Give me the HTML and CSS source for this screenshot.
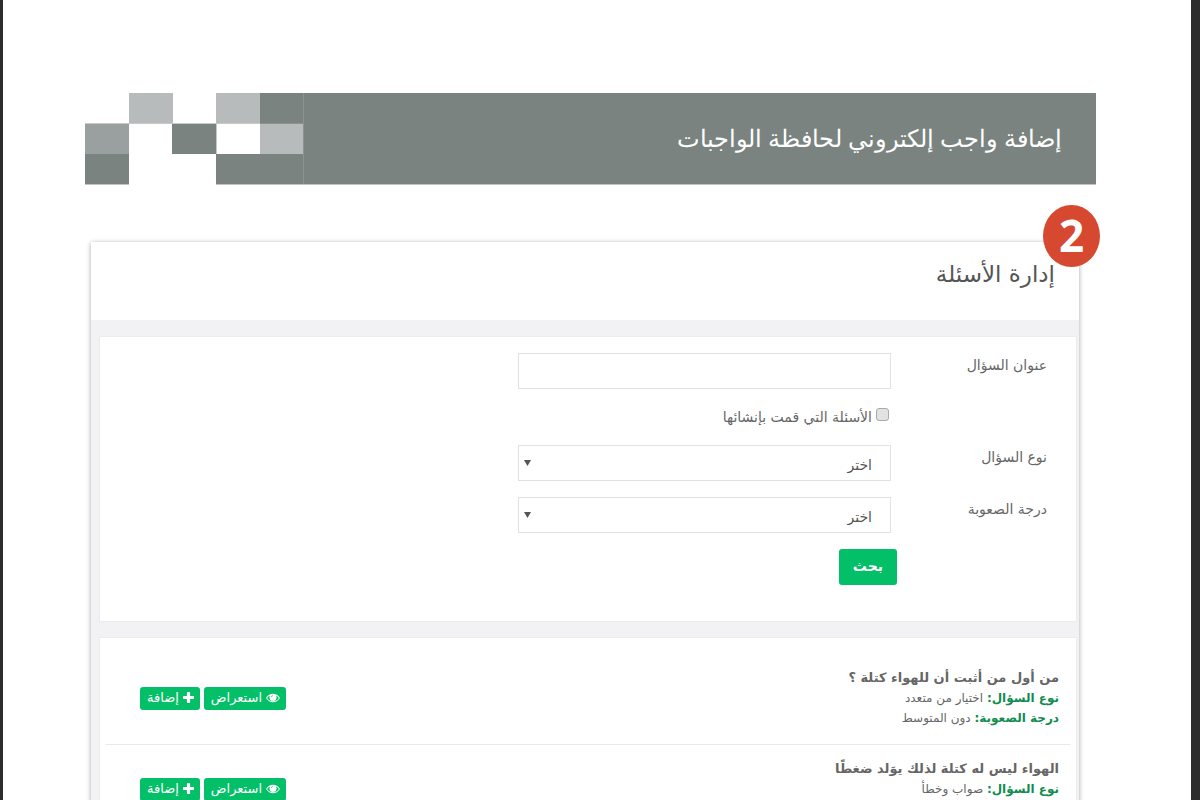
FILE: index.html
```html
<!DOCTYPE html>
<html lang="ar" dir="rtl">
<head>
<meta charset="utf-8">
<title>إدارة الأسئلة</title>
<meta name="viewport" content="width=device-width, initial-scale=1">
<link rel="stylesheet" href="styles.css">
</head>
<body>
<svg class="sprite" aria-hidden="true">
  <symbol id="eye" viewBox="0 0 14 10">
    <path fill="currentColor" fill-rule="evenodd" d="M0 5Q2.800.8 7 .8T14 5Q11.200 9.200 7 9.200T0 5ZM1.100 5Q3.300 8.300 7 8.300T12.900 5Q11.800 3.300 10 2.400Q10.500 3.200 10.500 4.300A3.500 3.500 0 0 1 3.500 4.300Q3.500 3.200 4 2.400Q2.200 3.300 1.100 5Z"/>
    <circle cx="7" cy="4.400" r="3.200" fill="currentColor"/>
    <path d="M5.300 4.200A1.700 1.700 0 0 1 7 2.500" fill="none" stroke="#02bf68" stroke-width=".6"/>
  </symbol>
  <symbol id="plus" viewBox="0 0 11 11">
    <path fill="currentColor" d="M4.700 0h1.600q.8 0 .8.800v3.100h3.100q.8 0 .8.800v1.600q0 .8-.8.800H7.100v3.100q0 .8-.8.800H4.700q-.8 0-.8-.8V7.100H.8q-.8 0-.8-.8V4.700q0-.8.800-.8h3.100V.8q0-.8.800-.8z"/>
  </symbol>
</svg>
<main class="sheet">
  <header class="banner">
    <h1 class="banner-title">إضافة واجب إلكتروني لحافظة الواجبات</h1>
    <svg class="mosaic" viewBox="0 0 219 92" aria-hidden="true">
      <g fill="#fff"><path d="M0 0h44v31H0zM88 0h43v31H88zM44 31h43v61H44zM87 61h44v31H87zM131 31h44v30h-44z"/></g>
      <g fill="#b7bbbb"><path d="M44 0h44v31H44zM131 0h44v31h-44zM175 31h43v30h-43z"/></g>
      <path fill="#9aa09f" d="M0 31h44v30H0z"/>
      <path fill="none" stroke="#c5c9c8" d="M0 30.500h175M131.500 31v30"/>
      <path fill="none" stroke="#8c9391" d="M218.500 0v91M175 30.500h43"/>
    </svg>
  </header>

  <section class="panel">
    <span class="badge">2</span>
    <div class="panel-head"><h2 class="panel-title">إدارة الأسئلة</h2></div>

    <form class="card filter">
      <label class="label" for="title">عنوان السؤال</label>
      <div class="field"><input class="control" id="title" type="text"></div>
      <div class="field second check">
        <input class="tick" id="mine" type="checkbox">
        <label for="mine">الأسئلة التي قمت بإنشائها</label>
      </div>
      <label class="label" for="type">نوع السؤال</label>
      <div class="field"><select class="control select" id="type"><option>اختر</option></select></div>
      <label class="label" for="level">درجة الصعوبة</label>
      <div class="field"><select class="control select" id="level"><option>اختر</option></select></div>
      <div class="second"><button class="search" type="button">بحث</button></div>
    </form>

    <div class="card list">
      <article class="item">
        <div>
          <h3 class="question">من أول من أثبت أن للهواء كتلة ؟</h3>
          <p class="meta"><b>نوع السؤال:</b> اختيار من متعدد</p>
          <p class="meta"><b>درجة الصعوبة:</b> دون المتوسط</p>
        </div>
        <div class="actions">
          <button class="small" type="button"><svg class="eye"><use href="#eye"/></svg>استعراض</button>
          <button class="small" type="button"><svg class="plus"><use href="#plus"/></svg>إضافة</button>
        </div>
      </article>
      <article class="item">
        <div>
          <h3 class="question">الهواء ليس له كتلة لذلك يوَلد ضغطًا</h3>
          <p class="meta"><b>نوع السؤال:</b> صواب وخطأ</p>
        </div>
        <div class="actions">
          <button class="small" type="button"><svg class="eye"><use href="#eye"/></svg>استعراض</button>
          <button class="small" type="button"><svg class="plus"><use href="#plus"/></svg>إضافة</button>
        </div>
      </article>
    </div>
  </section>
</main>
</body>
</html>
```

FILE: styles.css
```css
* { box-sizing: border-box; }
body {
  margin: 0;
  height: 100vh;
  overflow: hidden;
  background: #2d2d2d;
  color: #666;
  font-family: "DejaVu Sans", sans-serif;
  font-size: 14px;
  line-height: 20px;
}
h1, h2, h3, p { margin: 0; }
.sprite { position: absolute; width: 0; height: 0; }
.sheet {
  min-height: 100vh;
  margin-right: 9px;
  margin-left: 3px;
  padding: 93px 95px 0 82px;
  background: #fff;
}
.banner {
  display: flex;
  justify-content: space-between;
  align-items: center;
  background: #7b8380;
  border-bottom: 1px solid #c0c4c3;
}
.banner-title {
  padding-right: 34px;
  color: #fff;
  font-family: "Liberation Serif", "Times New Roman", serif;
  font-size: 24px;
  font-weight: 400;
  line-height: 40px;
}
.mosaic { display: block; width: 219px; height: 92px; margin-bottom: -1px; }
.panel {
  position: relative;
  margin: 57px 17px 0 6px;
  padding: 0 2px 0 8px;
  background: #f2f2f4;
  box-shadow: 0 1px 5px rgba(0, 0, 0, .35);
}
.badge {
  position: absolute;
  top: -37px;
  right: -21px;
  width: 57px;
  height: 62px;
  border-radius: 50%;
  background: #d64830;
  color: #fff;
  font: 700 44px/60px "Noto Sans", "Open Sans", sans-serif;
  text-align: center;
}
.panel-head {
  margin: 0 -2px 16px -8px;
  padding: 16px 24px 30px;
  background: #fff;
}
.panel-title {
  color: #555;
  font-size: 23px;
  font-weight: 400;
  line-height: 32px;
}
.card {
  margin-bottom: 15px;
  border: 1px solid #ececee;
  background: #fff;
}
.filter {
  display: grid;
  grid-template-columns: 179px 38.8%;
  row-gap: 16px;
  padding: 16px 0 36px;
}
.label { padding-right: 29px; line-height: 24px; }
.field { padding-right: 6px; }
.second { grid-column: 2; }
.control {
  display: block;
  width: 100%;
  height: 36px;
  padding: 4px 18px 0;
  border: 1px solid #e2e2e2;
  border-radius: 0;
  background: #fff;
  color: #555;
  font: 14px "DejaVu Sans", sans-serif;
}
.select {
  appearance: none;
  background: #fff url("data:image/svg+xml,%3Csvg xmlns='http://www.w3.org/2000/svg' width='7' height='6'%3E%3Cpath fill='%23555' d='M0 0h7L3.500 6z'/%3E%3C/svg%3E") no-repeat 5px 14px;
}
.check { display: flex; gap: 4px; line-height: 24px; }
.tick {
  appearance: none;
  width: 13px;
  height: 13px;
  margin: 3px 2px 0 0;
  border: 1px solid #aaa;
  border-radius: 3px;
  background: #e2e2e2;
}
.search, .small {
  border: 0;
  border-radius: 3px;
  background: #02bf68;
  color: #fff;
  font-family: "DejaVu Sans", sans-serif;
}
.search {
  display: block;
  height: 36px;
  padding: 0 14px 2px;
  font-size: 14px;
  font-weight: 700;
}
.list { padding: 16px 6px 0; }
.item {
  display: flex;
  justify-content: space-between;
  padding: 14px 11px 16px 34px;
  border-bottom: 1px solid #e8e8e8;
}
.question { color: #666; font-size: 13px; line-height: 20px; }
.meta { font-size: 12px; }
.meta b { color: #118c4f; }
.actions { display: flex; align-items: flex-start; gap: 4px; padding-top: 19px; }
.small {
  display: flex;
  align-items: center;
  gap: 4px;
  height: 23px;
  padding: 0 6px 2px 7px;
  font-size: 13px;
}
.eye { width: 14px; height: 10px; }
.plus { width: 11px; height: 11px; }
```
